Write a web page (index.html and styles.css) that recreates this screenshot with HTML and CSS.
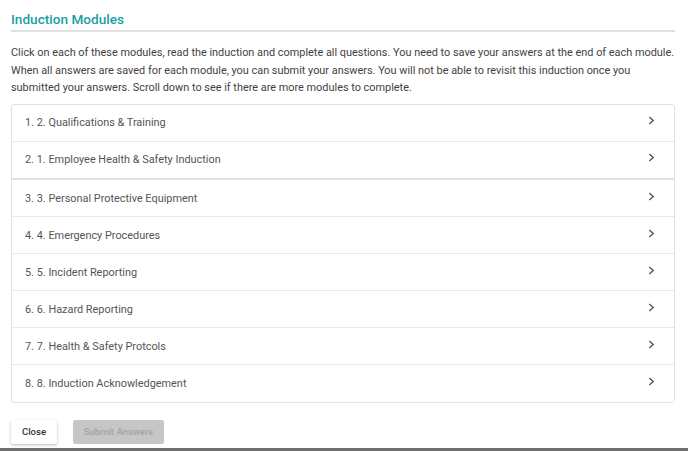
FILE: index.html
```html
<!DOCTYPE html>
<html>
<head>
<meta charset="utf-8">
<link rel="stylesheet" href="styles.css">
</head>
<body>
<div class="page">
  <div class="content">
    <h1 class="title">Induction Modules</h1>
    <p class="intro">Click on each of these modules, read the induction and complete all questions. You need to save your answers at the end of each module. When all answers are saved for each module, you can submit your answers. You will not be able to revisit this induction once you submitted your answers. Scroll down to see if there are more modules to complete.</p>
    <div class="list">
      <div class="row"><span>1. 2. Qualifications &amp; Training</span><svg class="chev" viewBox="0 0 8 10"><path d="M1.5 1 L6 5 L1.5 9" fill="none" stroke="#555" stroke-width="1.6"/></svg></div>
      <div class="row row-strong"><span>2. 1. Employee Health &amp; Safety Induction</span><svg class="chev" viewBox="0 0 8 10"><path d="M1.5 1 L6 5 L1.5 9" fill="none" stroke="#555" stroke-width="1.6"/></svg></div>
      <div class="row"><span>3. 3. Personal Protective Equipment</span><svg class="chev" viewBox="0 0 8 10"><path d="M1.5 1 L6 5 L1.5 9" fill="none" stroke="#555" stroke-width="1.6"/></svg></div>
      <div class="row"><span>4. 4. Emergency Procedures</span><svg class="chev" viewBox="0 0 8 10"><path d="M1.5 1 L6 5 L1.5 9" fill="none" stroke="#555" stroke-width="1.6"/></svg></div>
      <div class="row"><span>5. 5. Incident Reporting</span><svg class="chev" viewBox="0 0 8 10"><path d="M1.5 1 L6 5 L1.5 9" fill="none" stroke="#555" stroke-width="1.6"/></svg></div>
      <div class="row"><span>6. 6. Hazard Reporting</span><svg class="chev" viewBox="0 0 8 10"><path d="M1.5 1 L6 5 L1.5 9" fill="none" stroke="#555" stroke-width="1.6"/></svg></div>
      <div class="row"><span>7. 7. Health &amp; Safety Protcols</span><svg class="chev" viewBox="0 0 8 10"><path d="M1.5 1 L6 5 L1.5 9" fill="none" stroke="#555" stroke-width="1.6"/></svg></div>
      <div class="row"><span>8. 8. Induction Acknowledgement</span><svg class="chev" viewBox="0 0 8 10"><path d="M1.5 1 L6 5 L1.5 9" fill="none" stroke="#555" stroke-width="1.6"/></svg></div>
    </div>
    <div class="actions">
      <button class="btn btn-close">Close</button>
      <button class="btn btn-submit" disabled>Submit Answers</button>
    </div>
  </div>
  <div class="bar"></div>
</div>
</body>
</html>
```
FILE: styles.css
```css
html, body {
  margin: 0;
  padding: 0;
  background: #fff;
}
.page {
  width: 688px;
  height: 451px;
  display: flex;
  flex-direction: column;
  font-family: Roboto, "Liberation Sans", sans-serif;
  overflow: hidden;
}
.content {
  flex: 1;
  padding: 0 13px 0 11px;
}
.title {
  margin: 12px 0 0 0;
  padding-bottom: 4px;
  font-size: 13.6px;
  font-weight: 500;
  color: #1a9ea6;
  border-bottom: 2px solid #e0e0e0;
  line-height: 14px;
}
.intro {
  margin: 12px 0 7px 0;
  font-size: 10.9px;
  line-height: 17.6px;
  color: #3f3f3f;
}
.list {
  border: 1px solid #e2e2e2;
  border-radius: 3px;
}
.row {
  height: 36.1px;
  display: flex;
  align-items: center;
  justify-content: space-between;
  padding: 0 19px 0 13px;
  font-size: 10.9px;
  color: #555;
  border-top: 1px solid #e8e8e8;
}
.row:first-child {
  border-top: none;
}
.row-strong + .row {
  border-top: 2px solid #e0e0e0;
}
.chev {
  width: 7px;
  height: 9px;
  margin-top: -4px;
}
.actions {
  display: flex;
  gap: 16px;
  margin-top: 17px;
}
.btn {
  height: 24px;
  font-family: Roboto, "Liberation Sans", sans-serif;
  font-size: 9.5px;
  font-weight: 500;
  border: none;
  border-radius: 2px;
  padding: 0;
}
.btn-close {
  width: 46px;
  background: #fff;
  color: #333;
  box-shadow: 0 1px 3px rgba(0,0,0,0.28);
}
.btn-submit {
  width: 91px;
  background: #c6c6c6;
  color: #a4a4a4;
}
.bar {
  height: 3px;
  background: #6f6f6f;
}
```
